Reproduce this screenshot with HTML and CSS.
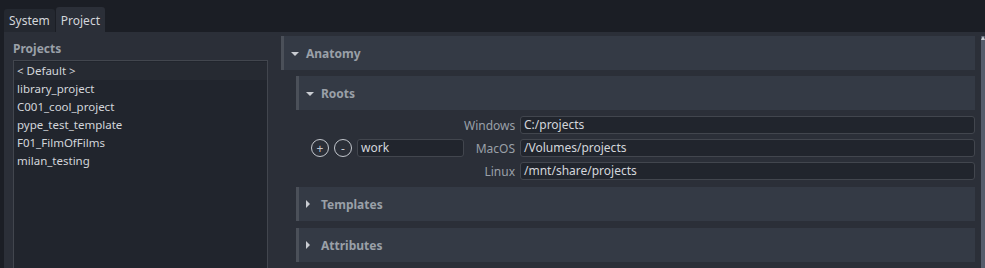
FILE: index.html
```html
<!DOCTYPE html>
<html lang="en">
<head>
    <meta charset="UTF-8">
    <title>Settings</title>
    <link rel="stylesheet" href="styles.css">
</head>
<body>
    <nav class="tabs">
        <div class="tab">System</div>
        <div class="tab active">Project</div>
    </nav>

    <main class="page">
        <section class="projects">
            <h2 class="projects-title">Projects</h2>
            <ul class="project-list">
                <li class="selected">&lt; Default &gt;</li>
                <li>library_project</li>
                <li>C001_cool_project</li>
                <li>pype_test_template</li>
                <li>F01_FilmOfFilms</li>
                <li>milan_testing</li>
            </ul>
        </section>

        <section class="settings">
            <div class="group">
                <div class="group-header">
                    <span class="arrow down"></span>
                    <span class="group-title">Anatomy</span>
                </div>
                <div class="group-body">
                    <div class="group">
                        <div class="group-header">
                            <span class="arrow down"></span>
                            <span class="group-title">Roots</span>
                        </div>
                        <div class="roots">
                            <div class="root-key">
                                <button class="round-btn">+</button>
                                <button class="round-btn">-</button>
                                <div class="field key-field">work</div>
                            </div>
                            <div class="root-form">
                                <label>Windows</label>
                                <div class="field">C:/projects</div>
                                <label>MacOS</label>
                                <div class="field">/Volumes/projects</div>
                                <label>Linux</label>
                                <div class="field">/mnt/share/projects</div>
                            </div>
                        </div>
                    </div>

                    <div class="group">
                        <div class="group-header">
                            <span class="arrow right"></span>
                            <span class="group-title">Templates</span>
                        </div>
                    </div>

                    <div class="group">
                        <div class="group-header">
                            <span class="arrow right"></span>
                            <span class="group-title">Attributes</span>
                        </div>
                    </div>
                </div>
            </div>
        </section>

        <div class="scrollbar"><span class="scroll-up"></span></div>
    </main>
</body>
</html>
```

FILE: styles.css
```css
:root {
    --top: #1b1e25;
    --panel: #2b2f38;
    --tab: #242830;
    --list: #21252d;
    --border: #42464e;
    --header: #343a45;
    --header-edge: #4b5059;
    --label: #9aa0a8;
    --text: #d3d6db;
}

* {
    margin: 0;
    padding: 0;
    box-sizing: border-box;
}

body {
    font-family: "Noto Sans", "DejaVu Sans", sans-serif;
    font-size: 11px;
    background: var(--top);
    color: var(--text);
    width: 985px;
    height: 268px;
    overflow: hidden;
}

/* Tabs */
.tabs {
    display: flex;
    align-items: flex-end;
    gap: 1px;
    height: 32px;
    padding-left: 4px;
}

.tab {
    height: 23px;
    padding: 0 5px;
    line-height: 23px;
    background: var(--tab);
    border-radius: 3px 3px 0 0;
    color: var(--text);
    font-size: 12px;
}

.tab.active {
    height: 25px;
    line-height: 27px;
    background: var(--panel);
}

/* Page */
.page {
    display: flex;
    height: 236px;
    margin-left: 4px;
    background: var(--panel);
}

.projects {
    width: 264px;
    padding-left: 9px;
    display: flex;
    flex-direction: column;
}

.projects-title {
    font-size: 12px;
    font-weight: bold;
    color: var(--label);
    height: 28px;
    line-height: 34px;
}

.project-list {
    list-style: none;
    flex: 1;
    background: var(--list);
    border: 1px solid var(--border);
    border-bottom: none;
    padding-top: 1px;
}

.project-list li {
    height: 18px;
    line-height: 18px;
    padding-left: 3px;
    font-size: 11.5px;
}

.project-list li.selected {
    background: #262a32;
}

/* Settings */
.settings {
    flex: 1;
    padding: 4px 0 0 13px;
}

.group-header {
    display: flex;
    align-items: center;
    height: 34px;
    background: var(--header);
    border-left: 3px solid var(--header-edge);
}

.group-title {
    font-size: 12px;
    font-weight: bold;
    color: var(--label);
}

.arrow {
    width: 22px;
    display: flex;
    justify-content: center;
}

.arrow::before {
    content: "";
    border: 4px solid transparent;
}

.arrow.down::before {
    border-top: 4px solid #c9ccd2;
    border-bottom: none;
    margin-top: 1px;
}

.arrow.right::before {
    border-left: 4px solid #c9ccd2;
    border-right: none;
    margin-left: -4px;
}

.group-body {
    display: flex;
    flex-direction: column;
    gap: 7px;
    padding: 6px 0 0 15px;
}

/* Roots */
.roots {
    display: flex;
    align-items: center;
    padding: 6px 0 0 15px;
}

.root-key {
    display: flex;
    align-items: center;
    gap: 5px;
}

.round-btn {
    width: 18px;
    height: 18px;
    border: 1px solid #c3c7cd;
    border-radius: 50%;
    background: transparent;
    color: #c3c7cd;
    font-family: inherit;
    font-size: 12px;
    line-height: 15px;
}

.field {
    height: 18px;
    line-height: 16px;
    padding-left: 3px;
    background: var(--list);
    border: 1px solid var(--border);
    border-radius: 3px;
    color: var(--text);
    font-size: 12px;
}

.key-field {
    width: 107px;
}

.root-form {
    flex: 1;
    display: grid;
    grid-template-columns: 51px 1fr;
    column-gap: 5px;
    row-gap: 5px;
    align-items: center;
}

.root-form label {
    text-align: right;
    color: var(--label);
    font-size: 12px;
}

/* Scrollbar */
.scrollbar {
    width: 4px;
    margin: 4px 0 0 6px;
    background: #555c6b;
    position: relative;
}

.scroll-up {
    position: absolute;
    top: 0;
    left: 0;
    border-left: 2px solid transparent;
    border-right: 2px solid transparent;
    border-bottom: 4px solid #c9ccd2;
}
```
